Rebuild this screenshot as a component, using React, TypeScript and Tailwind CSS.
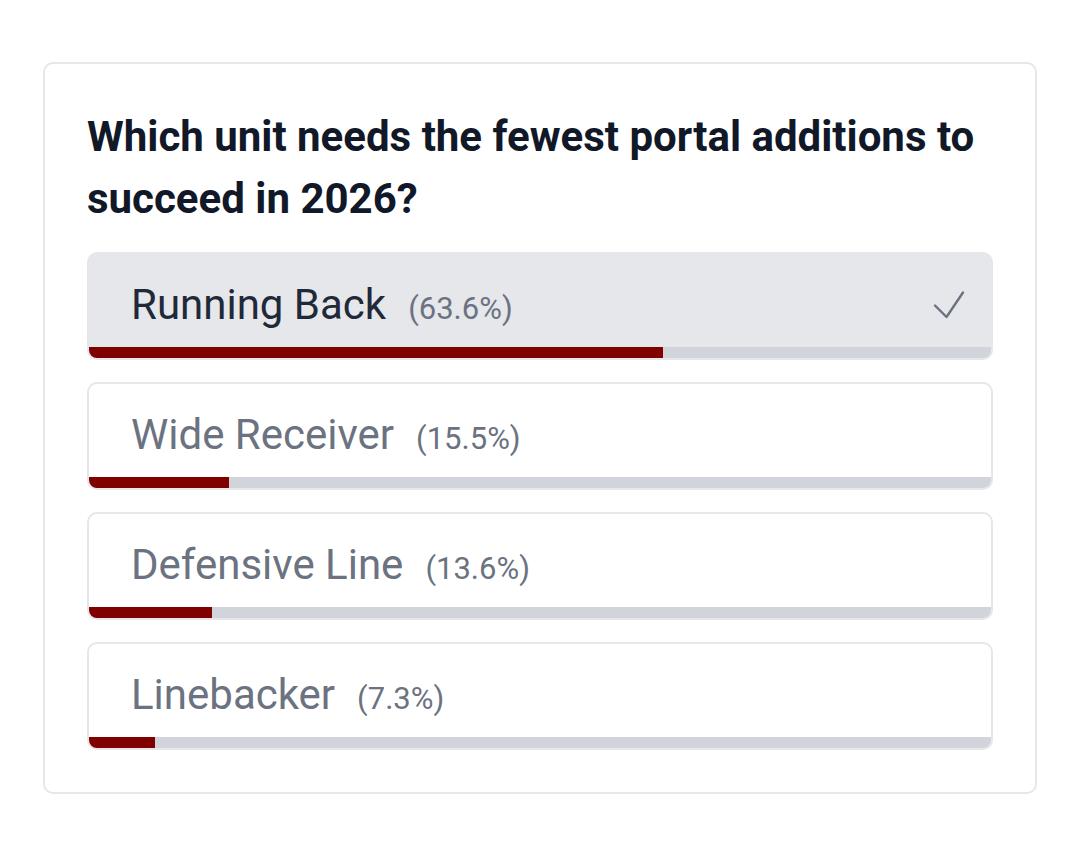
const options = [
  { label: 'Running Back', pct: 63.6, selected: true },
  { label: 'Wide Receiver', pct: 15.5, selected: false },
  { label: 'Defensive Line', pct: 13.6, selected: false },
  { label: 'Linebacker', pct: 7.3, selected: false },
]

function CheckMark() {
  return (
    <svg width="32" height="30" viewBox="0 0 32 30" fill="none" className="ml-auto">
      <path d="M2 15.5 13.5 27 30 2.5" stroke="#6b7280" strokeWidth="2.4" strokeLinecap="round" strokeLinejoin="round" />
    </svg>
  )
}

export default function App() {
  return (
    <div className="min-h-screen bg-white px-[43px] pt-[62px] font-['Roboto',sans-serif]">
      <div className="rounded-[10px] border-2 border-[#e5e7eb] px-[42px] pt-[42px] pb-[42px]">
        <h2 className="text-[42px] font-bold leading-[62px] text-[#111827]">
          Which unit needs the fewest portal additions to succeed in 2026?
        </h2>

        <div className="mt-[22px] flex flex-col gap-[22px]">
          {options.map((o) => (
            <div
              key={o.label}
              className={
                'flex h-[108px] flex-col overflow-hidden rounded-[10px] border-2 ' +
                (o.selected ? 'border-[#e5e7eb] bg-[#e5e7eb]' : 'border-[#e5e7eb] bg-white')
              }
            >
              <div className="flex flex-1 items-center pt-[8px] pl-[42px] pr-[26px]">
                <div className="flex items-baseline">
                  <span className={'text-[42px] ' + (o.selected ? 'text-[#1f2937]' : 'text-[#6b7280]')}>{o.label}</span>
                  <span className="ml-[22px] text-[31px] text-[#6b7280]">({o.pct}%)</span>
                </div>
                {o.selected && <CheckMark />}
              </div>
              <div className="h-[11px] w-full bg-[#d1d5db]">
                <div className="h-full bg-[#800000]" style={{ width: `${o.pct}%` }} />
              </div>
            </div>
          ))}
        </div>
      </div>
    </div>
  )
}
